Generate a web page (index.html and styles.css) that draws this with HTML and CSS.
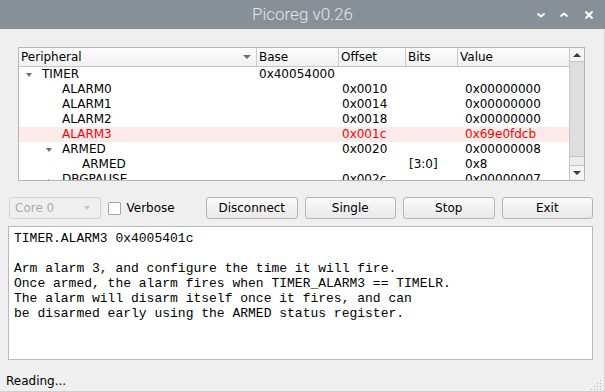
FILE: index.html
```html
<!DOCTYPE html>
<html lang="en">
<head>
<meta charset="utf-8">
<title>Picoreg v0.26</title>
<link rel="stylesheet" href="styles.css">
</head>
<body>
<div class="window">
  <header class="titlebar">
    <span class="title">Picoreg v0.26</span>
    <div class="wm-buttons">
      <svg class="wm-icon" width="10" height="10" viewBox="0 0 10 10"><polyline points="1.5,3.5 5,6.5 8.5,3.5" fill="none" stroke="#fff" stroke-width="2"/></svg>
      <svg class="wm-icon" width="10" height="10" viewBox="0 0 10 10"><polyline points="1.5,6.5 5,3.5 8.5,6.5" fill="none" stroke="#fff" stroke-width="2"/></svg>
      <svg class="wm-icon wm-close" width="10" height="10" viewBox="0 0 10 10"><path d="M1.5,1.5 L8.5,8.5 M8.5,1.5 L1.5,8.5" fill="none" stroke="#fff" stroke-width="2"/></svg>
    </div>
  </header>
  <div class="frame">
    <div class="tree">
      <div class="tree-main">
        <div class="cols tree-header">
          <div class="hcell hcell-first">Peripheral<span class="sort-ind"></span></div>
          <div class="hcell">Base</div>
          <div class="hcell">Offset</div>
          <div class="hcell">Bits</div>
          <div class="hcell">Value</div>
        </div>
        <div class="tree-body">
          <div class="cols row">
            <div class="c-name"><span class="twisty open"></span>TIMER</div>
            <div class="c-base">0x40054000</div>
            <div class="c-off"></div>
            <div class="c-bits"></div>
            <div class="c-val"></div>
          </div>
          <div class="cols row">
            <div class="c-name l1"><span class="twisty"></span>ALARM0</div>
            <div class="c-base"></div>
            <div class="c-off">0x0010</div>
            <div class="c-bits"></div>
            <div class="c-val">0x00000000</div>
          </div>
          <div class="cols row">
            <div class="c-name l1"><span class="twisty"></span>ALARM1</div>
            <div class="c-base"></div>
            <div class="c-off">0x0014</div>
            <div class="c-bits"></div>
            <div class="c-val">0x00000000</div>
          </div>
          <div class="cols row">
            <div class="c-name l1"><span class="twisty"></span>ALARM2</div>
            <div class="c-base"></div>
            <div class="c-off">0x0018</div>
            <div class="c-bits"></div>
            <div class="c-val">0x00000000</div>
          </div>
          <div class="cols row changed">
            <div class="c-name l1"><span class="twisty"></span>ALARM3</div>
            <div class="c-base"></div>
            <div class="c-off">0x001c</div>
            <div class="c-bits"></div>
            <div class="c-val">0x69e0fdcb</div>
          </div>
          <div class="cols row">
            <div class="c-name l1"><span class="twisty open"></span>ARMED</div>
            <div class="c-base"></div>
            <div class="c-off">0x0020</div>
            <div class="c-bits"></div>
            <div class="c-val">0x00000008</div>
          </div>
          <div class="cols row">
            <div class="c-name l2"><span class="twisty"></span>ARMED</div>
            <div class="c-base"></div>
            <div class="c-off"></div>
            <div class="c-bits">[3:0]</div>
            <div class="c-val">0x8</div>
          </div>
          <div class="cols row">
            <div class="c-name l1"><span class="twisty closed"></span>DBGPAUSE</div>
            <div class="c-base"></div>
            <div class="c-off">0x002c</div>
            <div class="c-bits"></div>
            <div class="c-val">0x00000007</div>
          </div>
        </div>
      </div>
      <div class="scrollbar">
        <div class="sb-btn sb-up"><span class="arrow-up"></span></div>
        <div class="sb-track"><div class="sb-handle"></div></div>
        <div class="sb-btn sb-down"><span class="arrow-down"></span></div>
      </div>
    </div>

    <div class="controls">
      <div class="combo disabled"><span>Core 0</span><span class="combo-arrow"></span></div>
      <label class="check"><span class="check-box"></span><span>Verbose</span></label>
      <button class="btn">Disconnect</button>
      <button class="btn">Single</button>
      <button class="btn">Stop</button>
      <button class="btn">Exit</button>
    </div>

    <pre class="details">TIMER.ALARM3 0x4005401c

Arm alarm 3, and configure the time it will fire.
Once armed, the alarm fires when TIMER_ALARM3 == TIMELR.
The alarm will disarm itself once it fires, and can
be disarmed early using the ARMED status register.</pre>

    <footer class="status">
      <span class="status-text">Reading...</span>
      <svg class="grip" width="11" height="11" viewBox="0 0 11 11">
        <g fill="#b4b4b4">
          <rect x="9" y="1" width="1" height="1"/>
          <rect x="6" y="4" width="1" height="1"/><rect x="9" y="4" width="1" height="1"/>
          <rect x="3" y="7" width="1" height="1"/><rect x="6" y="7" width="1" height="1"/><rect x="9" y="7" width="1" height="1"/>
          <rect x="0" y="10" width="1" height="1"/><rect x="3" y="10" width="1" height="1"/><rect x="6" y="10" width="1" height="1"/><rect x="9" y="10" width="1" height="1"/>
        </g>
      </svg>
    </footer>
  </div>
</div>
</body>
</html>
```
FILE: styles.css
```css
* { box-sizing: border-box; }
html, body { margin: 0; padding: 0; }
body {
  width: 605px;
  height: 392px;
  overflow: hidden;
  background: #efefef;
  font-family: "DejaVu Sans", sans-serif;
  font-size: 12px;
  color: #000;
}
.window {
  display: flex;
  flex-direction: column;
  height: 392px;
}

/* title bar */
.titlebar {
  height: 29px;
  flex: none;
  background: #878f97;
  display: grid;
  grid-template-columns: 1fr auto 1fr;
  align-items: center;
  color: #e6e6e6;
}
.title {
  grid-column: 2;
  font-family: Roboto, sans-serif;
  font-weight: 300;
  font-size: 17px;
  line-height: 29px;
}
.wm-buttons {
  grid-column: 3;
  justify-self: end;
  display: flex;
  align-items: center;
  gap: 13px;
  padding-right: 11px;
}
.wm-icon { display: block; }
.wm-close { margin-left: 2px; }

/* frame */
.frame {
  flex: 1;
  display: flex;
  flex-direction: column;
  border-right: 1px solid #d6d6d6;
  border-bottom: 1px solid #cfcfcf;
}

/* tree */
.tree {
  margin: 18px 19px 0 18px;
  height: 134px;
  flex: none;
  border: 1px solid #b5b5b5;
  background: #fff;
  display: flex;
}
.tree-main {
  flex: 1;
  min-width: 0;
  display: flex;
  flex-direction: column;
}
.cols {
  display: grid;
  grid-template-columns: 237px 82px 67px 52px 1fr;
}
.tree-header {
  height: 19px;
  flex: none;
  background: linear-gradient(#fcfcfc, #f1f1f1);
  border-bottom: 1px solid #c2c2c2;
}
.hcell {
  position: relative;
  padding-left: 2px;
  line-height: 18px;
  border-left: 1px solid #c9c9c9;
  white-space: nowrap;
}
.hcell-first {
  border-left: none;
  display: flex;
  justify-content: space-between;
  align-items: center;
  padding-right: 5px;
}
.sort-ind {
  width: 0; height: 0;
  border-left: 4px solid transparent;
  border-right: 4px solid transparent;
  border-top: 4px solid #6e6e6e;
}
.tree-body {
  flex: 1;
  overflow: hidden;
}
.row {
  height: 15px;
  line-height: 15px;
  white-space: nowrap;
}
.row.changed {
  background: #fdeaea;
  color: #ff0000;
}
.c-name {
  display: flex;
  align-items: center;
}
.c-name.l1 { padding-left: 20px; }
.c-name.l2 { padding-left: 40px; }
.twisty {
  width: 7px;
  height: 7px;
  margin-left: 7px;
  margin-right: 9px;
  flex: none;
  position: relative;
}
.twisty.open::before {
  content: "";
  position: absolute;
  left: 0; top: 2px;
  border-left: 3.5px solid transparent;
  border-right: 3.5px solid transparent;
  border-top: 4px solid #6e6e6e;
}
.twisty.closed::before {
  content: "";
  position: absolute;
  left: 2px; top: 3px;
  border-top: 3.5px solid transparent;
  border-bottom: 3.5px solid transparent;
  border-left: 4px solid #6e6e6e;
}
.c-base { padding-left: 3px; }
.c-off { padding-left: 4px; }
.c-bits { padding-left: 4px; }
.c-val { padding-left: 8px; }

/* scrollbar */
.scrollbar {
  width: 15px;
  flex: none;
  border-left: 1px solid #c6c6c6;
  display: flex;
  flex-direction: column;
  background: #ececec;
}
.sb-btn {
  height: 14px;
  flex: none;
  background: #f4f4f4;
  display: flex;
  align-items: center;
  justify-content: center;
}
.sb-up { border-bottom: 1px solid #c6c6c6; }
.sb-down { border-top: 1px solid #c6c6c6; height: 15px; }
.arrow-up {
  width: 0; height: 0;
  border-left: 4px solid transparent;
  border-right: 4px solid transparent;
  border-bottom: 4px solid #3c3c3c;
}
.arrow-down {
  width: 0; height: 0;
  border-left: 4px solid transparent;
  border-right: 4px solid transparent;
  border-top: 4px solid #3c3c3c;
}
.sb-track {
  flex: 1;
  background: #ececec;
}
.sb-handle {
  height: 95px;
  background: #dedede;
  border-bottom: 1px solid #c6c6c6;
}

/* controls */
.controls {
  margin: 16px 11px 0 9px;
  height: 22px;
  flex: none;
  display: grid;
  grid-template-columns: repeat(6, 1fr);
  column-gap: 7px;
}
.combo {
  border: 1px solid #d3d3d3;
  border-radius: 3px;
  background: #efefef;
  color: #ababab;
  display: flex;
  align-items: center;
  justify-content: space-between;
  padding: 0 10px 0 5px;
}
.combo-arrow {
  width: 0; height: 0;
  border-left: 3.5px solid transparent;
  border-right: 3.5px solid transparent;
  border-top: 4px solid #c4c4c4;
}
.check {
  display: flex;
  align-items: center;
  gap: 6px;
}
.check-box {
  width: 13px;
  height: 13px;
  border: 1px solid #a6a6a6;
  background: #fff;
  border-radius: 1px;
}
.btn {
  margin: 0;
  padding: 0;
  border: 1px solid #b5b5b5;
  border-radius: 3px;
  background: linear-gradient(#f9f9f9, #e9e9e9);
  font-family: "DejaVu Sans", sans-serif;
  font-size: 12px;
  color: #000;
}

/* details text */
.details {
  margin: 7px 11px 0 8px;
  height: 134px;
  flex: none;
  border: 1px solid #b9b9b9;
  background: #fff;
  padding: 4px 5px;
  font-family: "Liberation Mono", monospace;
  font-size: 13px;
  line-height: 15px;
  white-space: pre;
  overflow: hidden;
}

/* status */
.status {
  flex: 1;
  display: flex;
  justify-content: space-between;
  padding-left: 6px;
  padding-right: 2px;
  padding-bottom: 1px;
}
.status-text {
  margin-top: 14px;
  line-height: 14px;
}
.grip {
  align-self: flex-end;
  display: block;
}
```
